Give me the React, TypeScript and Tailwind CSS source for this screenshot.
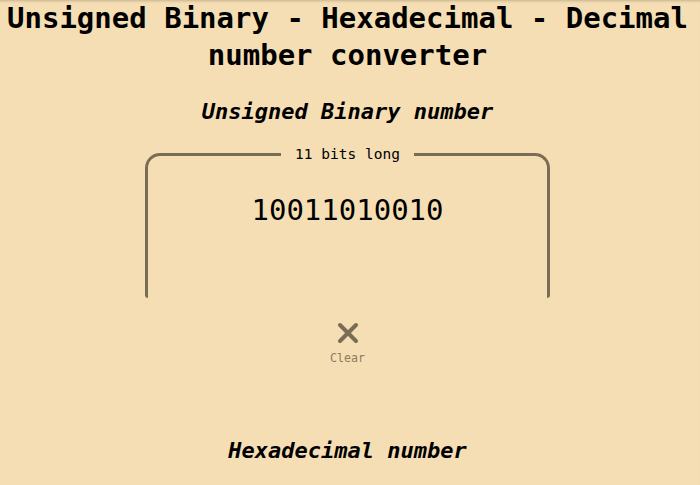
import React from "react";

const ClearIcon = () => (
  <svg width="22" height="22" viewBox="0 0 22 22" aria-hidden="true">
    <path
      d="M3 3 L19 19 M19 3 L3 19"
      stroke="#7a6d56"
      strokeWidth="4"
      strokeLinecap="round"
      fill="none"
    />
  </svg>
);

const App: React.FC = () => {
  const binary = "10011010010";

  return (
    <div className="min-h-screen bg-[#f5deb3] font-['DejaVu_Sans_Mono',monospace] text-black shadow-[inset_0_3px_3px_-2px_rgba(0,0,0,0.2)]">
      <div className="w-[695px] text-center">
        <h1 className="text-[29px] font-bold leading-[37px]">
          Unsigned Binary - Hexadecimal - Decimal number converter
        </h1>

        <h2 className="mt-[23px] text-[22px] font-bold italic leading-[30px]">
          Unsigned Binary number
        </h2>

        <fieldset className="mx-auto mt-[19px] h-[152px] w-[405px] rounded-t-[15px] rounded-b-[3px] border-[3px] border-b-0 border-[#7a6d56] px-4">
          <legend className="mx-auto px-[14px] text-[14.5px] leading-[17px]">
            {binary.length} bits long
          </legend>
          <div className="pt-[30px] text-[29px] leading-[34px]">{binary}</div>
        </fieldset>

        <button className="mx-auto mt-[24px] flex flex-col items-center text-[11.6px] leading-[14px] text-[#8b7b62]">
          <ClearIcon />
          <span className="mt-[7px]">Clear</span>
        </button>

        <h2 className="mt-[71px] text-[22px] font-bold italic leading-[30px]">
          Hexadecimal number
        </h2>
      </div>
    </div>
  );
};

export default App;
